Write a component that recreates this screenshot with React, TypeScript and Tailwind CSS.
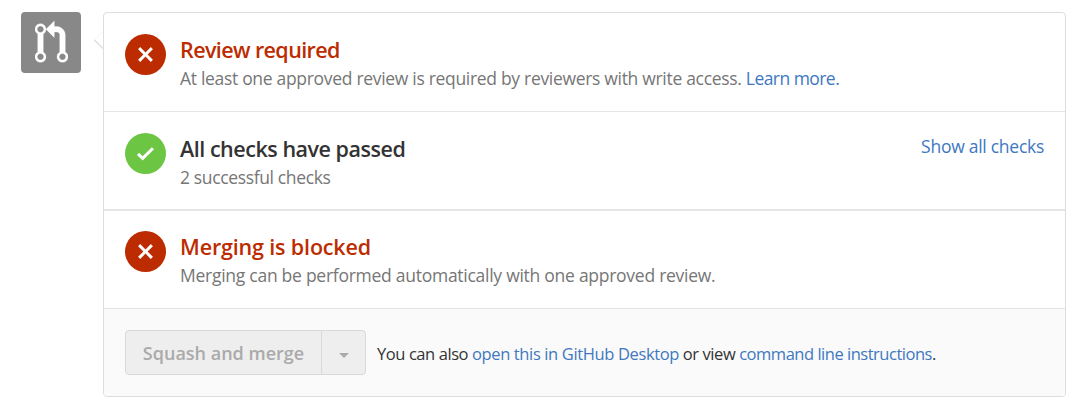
import type { ReactNode } from "react";

const X_PATH =
  "M7.48 8l3.75 3.75-1.48 1.48L6 9.48l-3.75 3.75-1.48-1.48L4.52 8 .77 4.25l1.48-1.48L6 6.52l3.75-3.75 1.48 1.48z";
const CHECK_PATH = "M12 5l-8 8-4-4 1.5-1.5L4 10l6.5-6.5z";
const PULL_PATH =
  "M11 11.28V5c-.03-.78-.34-1.47-.94-2.06C9.46 2.35 8.78 2.03 8 2H7V0L4 3l3 3V4h1c.27.02.48.11.69.31.21.2.3.42.31.69v6.28A1.993 1.993 0 0 0 10 15a1.993 1.993 0 0 0 1-3.72zm-1 2.92c-.66 0-1.2-.55-1.2-1.2 0-.65.55-1.2 1.2-1.2.65 0 1.2.55 1.2 1.2 0 .65-.55 1.2-1.2 1.2zM4 3c0-1.11-.89-2-2-2a1.993 1.993 0 0 0-1 3.72v6.56A1.993 1.993 0 0 0 2 15a1.993 1.993 0 0 0 1-3.72V4.72c.59-.34 1-.98 1-1.72zm-.8 10c0 .66-.55 1.2-1.2 1.2-.65 0-1.2-.55-1.2-1.2 0-.65.55-1.2 1.2-1.2.65 0 1.2.55 1.2 1.2zM2 4.2C1.34 4.2.8 3.65.8 3c0-.65.55-1.2 1.2-1.2.65 0 1.2.55 1.2 1.2 0 .65-.55 1.2-1.2 1.2z";

function StatusIcon({ ok = false }: { ok?: boolean }) {
  return (
    <div
      className={`flex size-[41px] shrink-0 items-center justify-center rounded-full ${
        ok ? "bg-[#6cc644]" : "bg-[#bd2c00]"
      }`}
    >
      <svg className="h-[23px] w-[17px] fill-white" viewBox="0 0 12 16">
        <path d={ok ? CHECK_PATH : X_PATH} />
      </svg>
    </div>
  );
}

function Row({
  ok,
  title,
  className,
  action,
  children,
}: {
  ok?: boolean;
  title: ReactNode;
  className: string;
  action?: ReactNode;
  children: ReactNode;
}) {
  return (
    <section className={`flex items-start pr-[21px] pl-[21px] ${className}`}>
      <StatusIcon ok={ok} />
      <div className="ml-[14px] flex-1 whitespace-nowrap">
        {title}
        {children}
      </div>
      {action}
    </section>
  );
}

export default function App() {
  return (
    <div className="flex h-[406px] w-[1074px] items-start bg-white pt-3 pl-[21px] font-['Open_Sans','Noto_Sans',sans-serif] text-[17.5px] text-[#333]">
      <div className="flex h-[61px] w-[60px] items-center justify-center rounded-[4px] bg-[#888]">
        <svg className="mt-px h-[44px] w-[33px] fill-white stroke-white stroke-[0.12]" viewBox="0 0 12 16">
          <path d={PULL_PATH} />
        </svg>
      </div>

      <main className="relative ml-[22px] h-[385px] w-[963px] rounded-[4px] border border-[#ddd]">
        <svg className="absolute top-[17px] -left-[10px] h-[21px] w-[9px]" viewBox="0 0 9 21">
          <path d="M9 1L0 10l9 9z" fill="white" />
          <path d="M9 1.5L.5 10" stroke="#f4f4f4" fill="none" />
          <path d="M.5 10l9 9" stroke="#ddd" strokeWidth="1.4" fill="none" />
        </svg>

        <Row
          className="h-[99px] border-b border-[#e5e5e5] pt-[21px]"
          title={
            <h2 className="text-[21.5px] leading-[32px] font-[550] tracking-[-0.6px] text-[#bd2c00]">
              Review required
            </h2>
          }
        >
          <p className="leading-[25px] tracking-[-0.31px] text-[#767676]">
            At least one approved review is required by reviewers with write access.{" "}
            <a className="tracking-[-0.55px] text-[#4078c0]">Learn more.</a>
          </p>
        </Row>

        <Row
          ok
          className="h-[99px] border-b-2 border-[#e5e5e5] pt-[21px]"
          title={
            <h2 className="text-[21.5px] leading-[32px] font-[550] tracking-[-0.47px]">
              All checks have passed
            </h2>
          }
          action={
            <a className="mt-px leading-[25px] tracking-[-0.27px] text-[#4078c0]">Show all checks</a>
          }
        >
          <p className="leading-[25px] tracking-[-0.36px] text-[#767676]">2 successful checks</p>
        </Row>

        <Row
          className="h-[98px] border-b border-[#e5e5e5] pt-[20px]"
          title={
            <h2 className="text-[21.5px] leading-[32px] font-[550] tracking-[-0.16px] text-[#bd2c00]">
              Merging is blocked
            </h2>
          }
        >
          <p className="leading-[25px] tracking-[-0.265px] text-[#767676]">
            Merging can be performed automatically with one approved review.
          </p>
        </Row>

        <footer className="flex h-[87px] items-center rounded-b-[3px] bg-[#fafafa] pl-[21px]">
          <div className="flex h-[45px] w-[241px] rounded-[4px] border border-[#d9d9d9] bg-[#eee] text-[#aaa]">
            <button className="w-[196px] border-r border-[#d9d9d9] pt-[2px] text-[18px] font-semibold whitespace-nowrap">
              Squash and merge
            </button>
            <button className="flex flex-1 items-center justify-center" aria-label="Select merge method">
              <svg className="mt-[5px] h-[5px] w-[10px] fill-[#aaa]" viewBox="0 0 10 5">
                <path d="M0 0h10L5 5z" />
              </svg>
            </button>
          </div>
          <p className="ml-[11px] pt-[3px] text-[16.5px] tracking-[-0.42px] whitespace-nowrap">
            You can also{" "}
            <a className="tracking-[-0.37px] text-[#4078c0]">open this in GitHub Desktop</a> or view{" "}
            <a className="tracking-[-0.48px] text-[#4078c0]">command line instructions</a>.
          </p>
        </footer>
      </main>
    </div>
  );
}
